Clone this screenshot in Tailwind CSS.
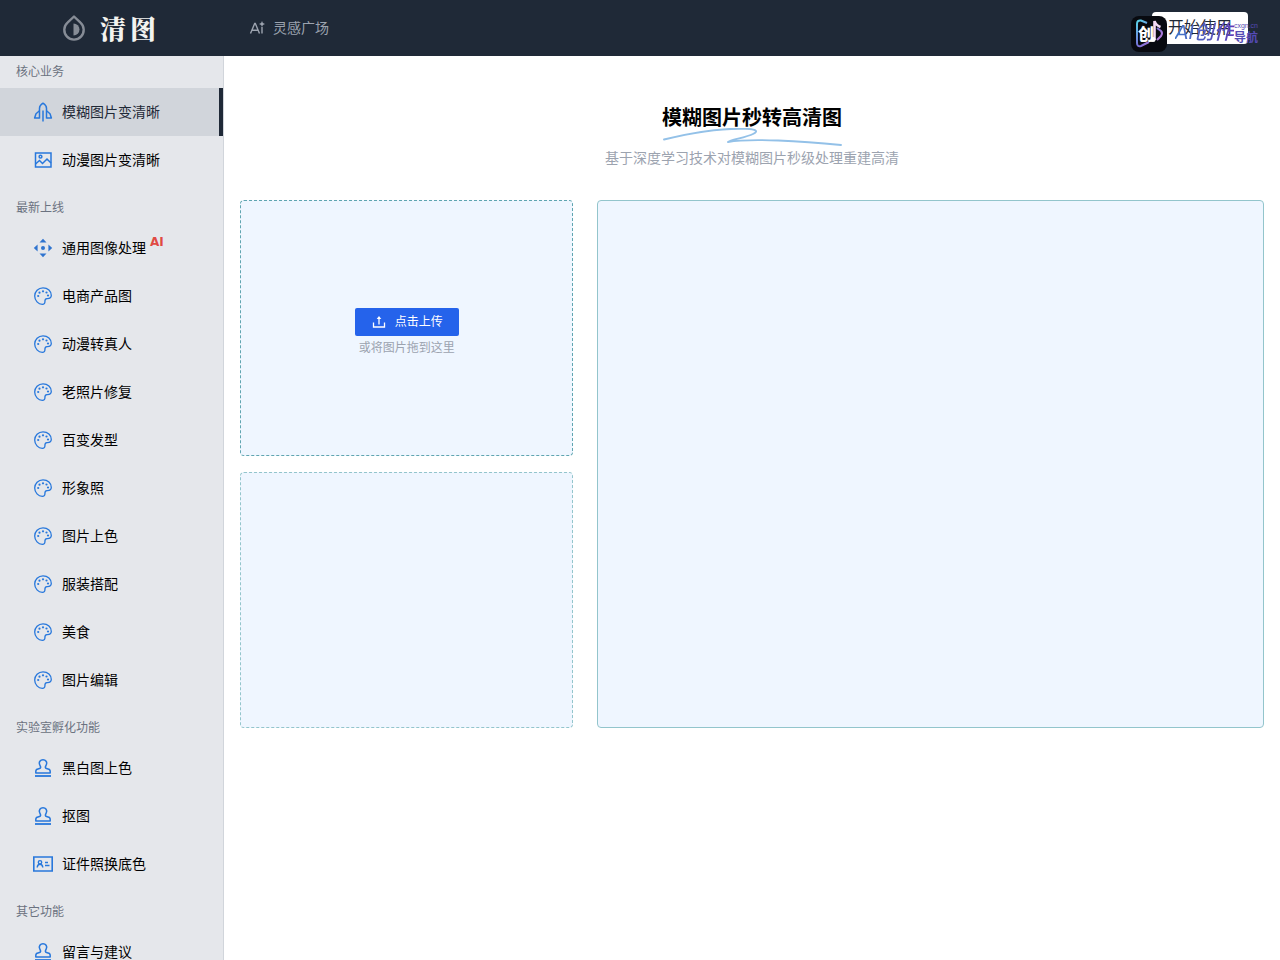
<!DOCTYPE html>
<html lang="zh-CN">
<head>
    <meta charset="UTF-8">
    <meta name="viewport" content="width=device-width, initial-scale=1.0">
    <title>清图 - 模糊图片秒转高清图</title>
    <script src="https://cdn.jsdelivr.net/npm/@tailwindcss/browser@4"></script>
</head>
<body class="h-screen flex flex-col overflow-hidden bg-white text-black font-['Liberation_Sans','Noto_Sans_CJK_SC',sans-serif]">
    <!-- Icon sprite -->
    <svg class="hidden" xmlns="http://www.w3.org/2000/svg">
        <symbol id="icon-rocket" viewBox="0 0 20 20">
            <g fill="none" stroke="currentColor" stroke-width="1.5" stroke-linejoin="round">
                <path d="M6.5 16.500V6.200C6.500 4.300 7.800 2.600 10 1.200c2.200 1.400 3.500 3.100 3.500 5V16.500"/>
                <path d="M6.500 8.800L3 11.800L1.600 16H6.500M13.500 8.800l3.500 3l1.400 4.200H13.500M10 8.500V19.500"/>
            </g>
        </symbol>
        <symbol id="icon-image" viewBox="0 0 20 20">
            <g fill="none" stroke="currentColor" stroke-width="1.5">
                <path d="M2.500 3h15.500v14H2.500z"/>
                <circle cx="7.500" cy="6.700" r="1.400"/>
                <path d="M2.500 14l4-3.500l3 3l4.500-4.500l4 4"/>
            </g>
        </symbol>
        <symbol id="icon-move" viewBox="0 0 20 20">
            <path fill="currentColor" d="M10 .8l3.500 3.800h-7zM10 19.200l3.500-3.800h-7zM.8 10l3.800-3.500v7zM19.200 10l-3.800-3.500v7z"/>
            <circle cx="10" cy="10" r="2" fill="currentColor"/>
        </symbol>
        <symbol id="icon-palette" viewBox="0 0 20 20">
            <path fill="none" stroke="currentColor" stroke-width="1.300" d="M10 1.800C5.300 1.800 1.700 5.500 1.700 10c0 4.600 3.600 8.300 7.600 8.300c1.900 0 2.700-1 2.600-2.500c-.1-1.900.1-3 2-3.100c1.500-.1 4.300.3 4.400-3.100C18.400 5.300 14.700 1.800 10 1.800z"/>
            <g fill="currentColor">
                <circle cx="5.200" cy="10" r="1.100"/>
                <circle cx="6.500" cy="6.700" r="1.100"/>
                <circle cx="10" cy="5.300" r="1.100"/>
                <circle cx="13.500" cy="6.500" r="1.100"/>
                <circle cx="15" cy="9.500" r="1.100"/>
            </g>
        </symbol>
        <symbol id="icon-stamp" viewBox="0 0 20 20">
            <path fill="none" stroke="currentColor" stroke-width="1.500" stroke-linejoin="round" d="M2.800 15v-1.600c0-1.400.8-2.300 2.200-2.500c2.200-.3 3-1 2.500-2.300L6.700 6.800C5.500 4 7.300 1.700 10 1.700s4.500 2.300 3.300 5.100l-.8 1.800c-.5 1.300.3 2 2.500 2.300c1.400.2 2.200 1.100 2.200 2.500V15z"/>
            <path fill="none" stroke="currentColor" stroke-width="1.800" d="M2 18h16"/>
        </symbol>
        <symbol id="icon-idcard" viewBox="0 0 20 20">
            <g fill="none" stroke="currentColor" stroke-width="1.400">
                <path stroke-width="1.600" d="M.8 3h18.400v14H.8z"/>
                <circle cx="7" cy="8.300" r="1.700"/>
                <path d="M4.200 13.500c.1-2 1.200-3.300 2.800-3.300s2.700 1.300 2.800 3.300M12 8.500h3M12 11.500h4.500"/>
            </g>
        </symbol>
    </svg>

    <!-- Header -->
    <header class="relative h-14 shrink-0 flex items-center justify-between bg-[#1f2937] pr-8">
        <div class="flex items-center">
            <a href="#" class="w-56 flex items-center justify-center gap-3 pr-2" aria-label="清图">
                <svg class="w-7 h-7" viewBox="0 0 28 28">
                    <path fill="none" stroke="#868c96" stroke-width="2.400" stroke-linejoin="round" d="M14 2.500L7.500 8.700a9.700 9.700 0 1 0 13 0z"/>
                    <path fill="#868c96" d="M13.500 9.500a6 6 0 0 1 0 12z"/>
                </svg>
                <span class="flex gap-1 text-[26px] leading-8 font-black text-[#f3f3f0] font-['Noto_Serif_CJK_SC','Noto_Sans_CJK_SC',serif]"><span>清</span><span>图</span></span>
            </a>
            <a href="#" class="ml-[25px] flex items-center gap-2 text-sm text-[#9ca3af]">
                <svg class="w-4 h-4" viewBox="0 0 16 16" fill="none" stroke="currentColor" stroke-width="1.400">
                    <path d="M1.500 13.500L5.700 3.500h.6l4.200 10M3 10.300h6M13 7v6.500"/>
                    <path fill="currentColor" stroke="none" d="M13 1l.9 2.100L16 4l-2.100.9L13 7l-.9-2.100L10 4l2.100-.9z"/>
                </svg>
                灵感广场
            </a>
        </div>
        <button type="button" class="h-8 px-4 rounded-sm bg-white text-base leading-8 text-[#1f2937]">开始使用</button>

        <!-- Site badge, sits over the button -->
        <div class="absolute right-[22px] top-4 flex items-start gap-2 pointer-events-none">
            <svg class="w-9 h-9" viewBox="0 0 36 36">
                <defs>
                    <linearGradient id="badge" x1="0" y1="0" x2="1" y2="1">
                        <stop offset="0" stop-color="#58d5e8"/>
                        <stop offset=".5" stop-color="#7770d8"/>
                        <stop offset="1" stop-color="#d884dc"/>
                    </linearGradient>
                </defs>
                <rect width="36" height="36" rx="8" fill="#080a10"/>
                <path d="M16 7L10 4.500Q6 4 6 8v19q0 4 4 3l8-4M26 12l4 3q2 2 0 5l-4 4" fill="none" stroke="url(#badge)" stroke-width="2"/>
                <text x="7" y="24" font-size="16" font-weight="900" fill="#fff">创</text>
                <path d="M23.500 24V5q1 4 6 6" fill="none" stroke="#f3d9f4" stroke-width="2.600"/>
                <circle cx="22" cy="23.500" r="2.500" fill="#fff"/>
            </svg>
            <span class="text-xl leading-8 italic font-medium whitespace-nowrap bg-linear-to-r from-[#3f76c8] to-[#5e3db8] bg-clip-text text-transparent">AI创作</span>
            <span class="-ml-2 flex flex-col pt-1 text-[#554bb5]">
                <span class="text-[7px] leading-3">cxgn.cn</span>
                <span class="text-xs leading-3 font-bold">导航</span>
            </span>
        </div>
    </header>

    <div class="flex flex-1 min-h-0">
        <!-- Sidebar -->
        <nav class="w-56 shrink-0 overflow-hidden bg-[#e5e7eb] border-r border-[#d1d5db] text-sm">
            <section class="mb-2">
                <h2 class="h-8 px-4 text-xs leading-8 text-[#6b7280]">核心业务</h2>
                <a href="#" class="h-12 pl-[33px] flex items-center gap-[9px] bg-[#d1d5db] border-r-4 border-[#1f2937] text-[#1f2937]"><svg class="w-5 h-5 text-[#2878dc]"><use href="#icon-rocket"/></svg>模糊图片变清晰</a>
                <a href="#" class="h-12 pl-[33px] flex items-center gap-[9px]"><svg class="w-5 h-5 text-[#2878dc]"><use href="#icon-image"/></svg>动漫图片变清晰</a>
            </section>
            <section class="mb-2">
                <h2 class="h-8 px-4 text-xs leading-8 text-[#6b7280]">最新上线</h2>
                <a href="#" class="h-12 pl-[33px] flex items-center gap-[9px]"><svg class="w-5 h-5 text-[#2f74cf]"><use href="#icon-move"/></svg><span class="flex gap-1">通用图像处理<sup class="top-0 text-xs leading-2 font-bold text-[#e04a43] font-['DejaVu_Sans',sans-serif]">AI</sup></span></a>
                <a href="#" class="h-12 pl-[33px] flex items-center gap-[9px]"><svg class="w-5 h-5 text-[#2878dc]"><use href="#icon-palette"/></svg>电商产品图</a>
                <a href="#" class="h-12 pl-[33px] flex items-center gap-[9px]"><svg class="w-5 h-5 text-[#2878dc]"><use href="#icon-palette"/></svg>动漫转真人</a>
                <a href="#" class="h-12 pl-[33px] flex items-center gap-[9px]"><svg class="w-5 h-5 text-[#2878dc]"><use href="#icon-palette"/></svg>老照片修复</a>
                <a href="#" class="h-12 pl-[33px] flex items-center gap-[9px]"><svg class="w-5 h-5 text-[#2878dc]"><use href="#icon-palette"/></svg>百变发型</a>
                <a href="#" class="h-12 pl-[33px] flex items-center gap-[9px]"><svg class="w-5 h-5 text-[#2878dc]"><use href="#icon-palette"/></svg>形象照</a>
                <a href="#" class="h-12 pl-[33px] flex items-center gap-[9px]"><svg class="w-5 h-5 text-[#2878dc]"><use href="#icon-palette"/></svg>图片上色</a>
                <a href="#" class="h-12 pl-[33px] flex items-center gap-[9px]"><svg class="w-5 h-5 text-[#2878dc]"><use href="#icon-palette"/></svg>服装搭配</a>
                <a href="#" class="h-12 pl-[33px] flex items-center gap-[9px]"><svg class="w-5 h-5 text-[#2878dc]"><use href="#icon-palette"/></svg>美食</a>
                <a href="#" class="h-12 pl-[33px] flex items-center gap-[9px]"><svg class="w-5 h-5 text-[#2878dc]"><use href="#icon-palette"/></svg>图片编辑</a>
            </section>
            <section class="mb-2">
                <h2 class="h-8 px-4 text-xs leading-8 text-[#6b7280]">实验室孵化功能</h2>
                <a href="#" class="h-12 pl-[33px] flex items-center gap-[9px]"><svg class="w-5 h-5 text-[#2878dc]"><use href="#icon-stamp"/></svg>黑白图上色</a>
                <a href="#" class="h-12 pl-[33px] flex items-center gap-[9px]"><svg class="w-5 h-5 text-[#2878dc]"><use href="#icon-stamp"/></svg>抠图</a>
                <a href="#" class="h-12 pl-[33px] flex items-center gap-[9px]"><svg class="w-5 h-5 text-[#2878dc]"><use href="#icon-idcard"/></svg>证件照换底色</a>
            </section>
            <section class="mb-2">
                <h2 class="h-8 px-4 text-xs leading-8 text-[#6b7280]">其它功能</h2>
                <a href="#" class="h-12 pl-[33px] flex items-center gap-[9px]"><svg class="w-5 h-5 text-[#2878dc]"><use href="#icon-stamp"/></svg>留言与建议</a>
            </section>
        </nav>

        <!-- Main -->
        <main class="flex-1 min-w-0 overflow-auto px-4 pt-12 pb-4">
            <div class="flex flex-col items-center text-center">
                <div class="relative">
                    <h1 class="text-xl leading-7 font-bold">模糊图片秒转高清图</h1>
                    <svg class="absolute left-0 top-6 w-full h-5" viewBox="0 0 180 20" fill="none">
                        <path d="M2 11.500C32 4 62 0 84 .8C94 1.200 97 3 91 6C84 9.500 68 12 66 14C88 10 140 13 179 17" stroke="#93c1e8" stroke-width="1.900" stroke-linecap="round" stroke-linejoin="round"/>
                    </svg>
                </div>
                <p class="mt-4 text-sm text-[#9ca3af]">基于深度学习技术对模糊图片秒级处理重建高清</p>
            </div>

            <div class="mt-8 grid grid-cols-[1fr_2fr] gap-6">
                <div class="flex flex-col gap-4">
                    <div class="h-64 pt-2 flex flex-col items-center justify-center gap-1 rounded-sm border border-dashed border-[#5fa5b0] bg-[#eff6ff]">
                        <button type="button" class="h-7 px-4 flex items-center gap-2 rounded-xs bg-[#2563eb] text-xs text-white">
                            <svg class="w-4 h-4" viewBox="0 0 16 16" fill="none" stroke="currentColor" stroke-width="1.300">
                                <path d="M2.500 8.500v4.500h11V8.500M8 10.500V4"/>
                                <path d="M8 2l2.300 3H5.700z" fill="currentColor" stroke="none"/>
                            </svg>
                            点击上传
                        </button>
                        <p class="text-xs text-[#9ca3af]">或将图片拖到这里</p>
                    </div>
                    <div class="h-64 rounded-sm border border-dashed border-[#93c5cc] bg-[#eff6ff]"></div>
                </div>
                <div class="rounded-sm border border-[#93c5cc] bg-[#eff6ff]"></div>
            </div>
        </main>
    </div>
</body>
</html>
